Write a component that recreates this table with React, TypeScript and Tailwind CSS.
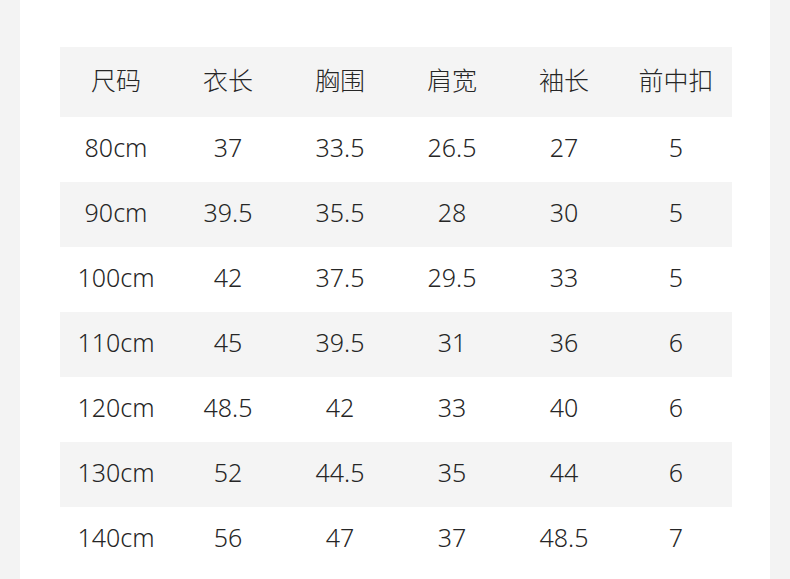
export default function App() {
  const headers = ['尺码', '衣长', '胸围', '肩宽', '袖长', '前中扣']
  const rows = [
    ['80cm', '37', '33.5', '26.5', '27', '5'],
    ['90cm', '39.5', '35.5', '28', '30', '5'],
    ['100cm', '42', '37.5', '29.5', '33', '5'],
    ['110cm', '45', '39.5', '31', '36', '6'],
    ['120cm', '48.5', '42', '33', '40', '6'],
    ['130cm', '52', '44.5', '35', '44', '6'],
    ['140cm', '56', '47', '37', '48.5', '7'],
  ]

  return (
    <div className="h-[579px] w-[790px] overflow-hidden bg-[#f3f3f3] px-5">
      <div className="h-full bg-white px-10 pt-[47px]">
        <div className="w-[672px] text-[#262626]">
          <div
            className="grid h-[70px] grid-cols-6 items-center bg-[#f4f4f4] pb-[4px] text-[25px] font-light"
            style={{ fontFamily: '"Noto Sans CJK SC", sans-serif' }}
          >
            {headers.map((h) => (
              <div key={h} className="text-center">{h}</div>
            ))}
          </div>
          {rows.map((r, i) => (
            <div
              key={r[0]}
              className={`grid h-[65px] grid-cols-6 items-center pb-[4px] text-[25px] font-light ${i % 2 === 1 ? 'bg-[#f4f4f4]' : 'bg-white'}`}
              style={{ fontFamily: '"Noto Sans", sans-serif' }}
            >
              {r.map((c, j) => (
                <div key={j} className="text-center">{c}</div>
              ))}
            </div>
          ))}
        </div>
      </div>
    </div>
  )
}
